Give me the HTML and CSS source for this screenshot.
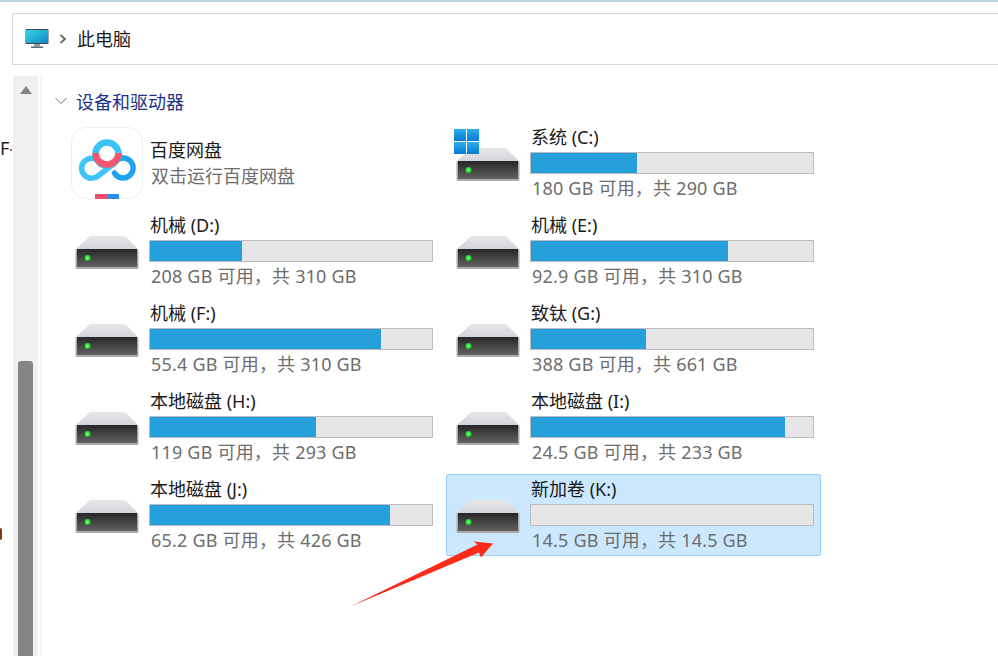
FILE: index.html
```html
<!DOCTYPE html>
<html lang="zh-CN">
  <head>
    <meta charset="UTF-8" />
    <title>此电脑</title>
    <link rel="stylesheet" href="styles.css">
  </head>
  <body>
    <svg class="defs" width="0" height="0">
      <defs>
        <linearGradient id="drive-front" x1="0" y1="0" x2="0" y2="1">
          <stop offset="0" stop-color="#262626" />
          <stop offset="1" stop-color="#626262" />
        </linearGradient>
        <linearGradient id="drive-top" x1="0" y1="0" x2="0" y2="1">
          <stop offset="0" stop-color="#e6e7e9" />
          <stop offset="1" stop-color="#d4d5d8" />
        </linearGradient>
        <linearGradient id="screen" x1="0" y1="0" x2="1" y2="1">
          <stop offset="0" stop-color="#35d3e0" />
          <stop offset="1" stop-color="#1287c9" />
        </linearGradient>
        <linearGradient id="win" x1="0" y1="0" x2="0" y2="1">
          <stop offset="0" stop-color="#2cb0ee" />
          <stop offset="1" stop-color="#0678d2" />
        </linearGradient>
        <symbol id="drive" viewBox="0 0 64 34">
          <path d="M15 0H50L63 13H1Z" fill="url(#drive-top)" />
          <rect x="0.5" y="13" width="63" height="20" rx="1.5" fill="#a9a9a9" />
          <rect x="2" y="13" width="60" height="18" fill="url(#drive-front)" />
          <circle cx="12.5" cy="22" r="3" fill="#2bd52b" />
          <circle cx="12.5" cy="22" r="1.4" fill="#7dff6e" />
        </symbol>
      </defs>
    </svg>

    <div class="topline"></div>

    <div class="address">
      <svg class="pc-icon" width="24" height="20" viewBox="0 0 24 20">
        <rect x="0.5" y="0" width="23" height="15" rx="1" fill="#3a4a55" />
        <rect x="1" y="1" width="22" height="13" fill="url(#screen)" />
        <rect x="9" y="15" width="6" height="2.5" fill="#8b9aa3" />
        <rect x="6" y="17.5" width="12" height="1.5" fill="#5b6870" />
      </svg>
      <svg class="crumb" width="8" height="10" viewBox="0 0 8 10">
        <path d="M1.5 1L6 5L1.5 9" fill="none" stroke="#666" stroke-width="1.8" />
      </svg>
      <span class="crumb-text">此电脑</span>
    </div>

    <div class="main">
      <div class="sliver">
        <div class="cut-line">
          <span>F</span>
          <span class="cut-colon"></span>
        </div>
        <span class="cut-dot"></span>
      </div>

      <div class="scrollbar">
        <span class="scroll-up"></span>
        <div class="thumb"></div>
      </div>
      <div class="divider"></div>

      <div class="content">
        <div class="group-head">
          <svg width="12" height="8" viewBox="0 0 12 8">
            <path d="M0.5 1L6 6.5L11.5 1" fill="none" stroke="#777" stroke-width="1" />
          </svg>
          <span>设备和驱动器</span>
        </div>

        <div class="tiles">
          <div class="tile app">
            <div class="app-icon">
              <svg width="72" height="72" viewBox="0 0 72 72">
                <rect x="0.5" y="0.5" width="71" height="71" rx="14" fill="#fff" stroke="#eeeeee" />
                <path d="M27 33.5A10 10 0 1 0 27 49L41 38" fill="none" stroke="#3cc4fb" stroke-width="5.5" stroke-linecap="round" />
                <path d="M44.5 34.5A10 10 0 1 1 43.5 46" fill="none" stroke="#1fa3f1" stroke-width="5.5" stroke-linecap="round" />
                <circle cx="36" cy="27" r="11.5" fill="none" stroke="#3bc3f7" stroke-width="6.5" />
                <path d="M24.5 26A11.5 11.5 0 1 0 47.5 26" fill="none" stroke="#f8566f" stroke-width="6.5" />
                <rect x="24" y="67" width="12" height="5" fill="#fb4a6e" />
                <rect x="36" y="67" width="12" height="5" fill="#2a8ff2" />
              </svg>
            </div>
            <div class="info">
              <div class="name">百度网盘</div>
              <div class="sub">双击运行百度网盘</div>
            </div>
          </div>

          <div class="tile">
            <div class="drive-icon">
              <svg class="win-logo" width="25" height="25" viewBox="0 0 25 25">
                <rect width="12" height="12" fill="url(#win)" />
                <rect x="13" width="12" height="12" fill="url(#win)" />
                <rect y="13" width="12" height="12" fill="url(#win)" />
                <rect x="13" y="13" width="12" height="12" fill="url(#win)" />
              </svg>
              <svg width="64" height="34"><use href="#drive" /></svg>
            </div>
            <div class="info">
              <div class="name">系统 (C:)</div>
              <div class="bar"><div class="fill" style="width: 37.6%"></div></div>
              <div class="sub">180 GB 可用，共 290 GB</div>
            </div>
          </div>

          <div class="tile">
            <div class="drive-icon"><svg width="64" height="34"><use href="#drive" /></svg></div>
            <div class="info">
              <div class="name">机械 (D:)</div>
              <div class="bar"><div class="fill" style="width: 32.6%"></div></div>
              <div class="sub">208 GB 可用，共 310 GB</div>
            </div>
          </div>

          <div class="tile">
            <div class="drive-icon"><svg width="64" height="34"><use href="#drive" /></svg></div>
            <div class="info">
              <div class="name">机械 (E:)</div>
              <div class="bar"><div class="fill" style="width: 69.9%"></div></div>
              <div class="sub">92.9 GB 可用，共 310 GB</div>
            </div>
          </div>

          <div class="tile">
            <div class="drive-icon"><svg width="64" height="34"><use href="#drive" /></svg></div>
            <div class="info">
              <div class="name">机械 (F:)</div>
              <div class="bar"><div class="fill" style="width: 81.9%"></div></div>
              <div class="sub">55.4 GB 可用，共 310 GB</div>
            </div>
          </div>

          <div class="tile">
            <div class="drive-icon"><svg width="64" height="34"><use href="#drive" /></svg></div>
            <div class="info">
              <div class="name">致钛 (G:)</div>
              <div class="bar"><div class="fill" style="width: 40.8%"></div></div>
              <div class="sub">388 GB 可用，共 661 GB</div>
            </div>
          </div>

          <div class="tile">
            <div class="drive-icon"><svg width="64" height="34"><use href="#drive" /></svg></div>
            <div class="info">
              <div class="name">本地磁盘 (H:)</div>
              <div class="bar"><div class="fill" style="width: 58.9%"></div></div>
              <div class="sub">119 GB 可用，共 293 GB</div>
            </div>
          </div>

          <div class="tile">
            <div class="drive-icon"><svg width="64" height="34"><use href="#drive" /></svg></div>
            <div class="info">
              <div class="name">本地磁盘 (I:)</div>
              <div class="bar"><div class="fill" style="width: 90.1%"></div></div>
              <div class="sub">24.5 GB 可用，共 233 GB</div>
            </div>
          </div>

          <div class="tile">
            <div class="drive-icon"><svg width="64" height="34"><use href="#drive" /></svg></div>
            <div class="info">
              <div class="name">本地磁盘 (J:)</div>
              <div class="bar"><div class="fill" style="width: 85.1%"></div></div>
              <div class="sub">65.2 GB 可用，共 426 GB</div>
            </div>
          </div>

          <div class="tile selected">
            <div class="drive-icon"><svg width="64" height="34"><use href="#drive" /></svg></div>
            <div class="info">
              <div class="name">新加卷 (K:)</div>
              <div class="bar"></div>
              <div class="sub">14.5 GB 可用，共 14.5 GB</div>
            </div>
          </div>
        </div>
      </div>
    </div>

    <!-- Red annotation arrow on top of the screenshot -->
    <svg class="arrow" width="998" height="656" viewBox="0 0 998 656">
      <path d="M350.5 606.5L477.5 544.5L473.5 541.5L493 543.5L481 557.5L479 552.5Z" fill="#fb2a1b" />
    </svg>
  </body>
</html>
```

FILE: styles.css
```css
* {
  box-sizing: border-box;
}

body {
  margin: 0;
  width: 998px;
  height: 656px;
  overflow: hidden;
  position: relative;
  background: #fff;
  color: #1a1a1a;
  font-family: "Noto Sans", "Noto Sans CJK SC", sans-serif;
  font-size: 18px;
}

.defs {
  position: absolute;
}

.topline {
  height: 2px;
  background: #c3d2e2;
}

.address {
  display: flex;
  align-items: center;
  height: 52px;
  margin: 11px 0 0 12px;
  padding-left: 12px;
  border: 1px solid #d9d9d9;
  border-right: none;
}

.crumb {
  margin-left: 10px;
  margin-right: 10px;
}

.crumb-text {
  margin-top: -2px;
}

.main {
  display: flex;
  height: 580px;
  margin-top: 11px;
}

.sliver {
  width: 13px;
  overflow: hidden;
}

.cut-line {
  display: flex;
  align-items: center;
  height: 24px;
  margin-top: 60px;
}

.cut-colon {
  width: 2px;
  height: 2px;
  margin: 3px 0 0 1px;
  background: #b5651d;
}

.cut-dot {
  display: block;
  width: 2px;
  height: 12px;
  margin-top: 368px;
  border-radius: 0 6px 6px 0;
  background: #7a3a1a;
}

.scrollbar {
  width: 25px;
  padding: 10px 5px 0;
  background: #f0f0f0;
}

.scroll-up {
  display: block;
  width: 0;
  margin: 0 auto 267px;
  border-left: 6px solid transparent;
  border-right: 6px solid transparent;
  border-bottom: 8px solid #858585;
}

.thumb {
  height: 300px;
  border-radius: 3px 3px 0 0;
  background: #858585;
}

.divider {
  width: 2px;
  margin-left: 2px;
  background: #f5f5f5;
}

.content {
  flex: 1;
  padding-left: 23px;
}

.group-head {
  display: flex;
  align-items: center;
  gap: 9px;
  height: 24px;
  margin: 13px 0 9px -10px;
  color: #1e3287;
}

.tiles {
  display: grid;
  grid-template-columns: 375px 375px;
  grid-auto-rows: 82px;
  gap: 6px;
}

.tile {
  display: flex;
  border: 1px solid transparent;
}

.tile.selected {
  background: #cce8ff;
  border-color: #99d1ff;
  border-radius: 2px;
}

.app-icon {
  width: 83px;
  padding: 4px 0 0 5px;
}

.drive-icon {
  position: relative;
  width: 83px;
  padding: 25px 0 0 9px;
}

.drive-icon svg {
  display: block;
}

.win-logo {
  position: absolute;
  top: 6px;
  left: 7px;
  z-index: 1;
}

.info {
  flex: 1;
  padding-top: 1px;
}

.name {
  height: 26px;
  padding-left: 1px;
  line-height: 26px;
}

.bar {
  width: 284px;
  height: 22px;
  margin-top: 2px;
  border: 1px solid #bcbcbc;
  background: #e6e6e6;
}

.fill {
  height: 100%;
  background: #26a0da;
}

.sub {
  height: 24px;
  margin-top: 2px;
  padding-left: 2px;
  line-height: 24px;
  color: #6d6d6d;
}

.bar + .sub {
  letter-spacing: 0.2px;
}

.app .info {
  padding-top: 14px;
}

.app .sub {
  margin-top: 1px;
}

.arrow {
  position: absolute;
  top: 0;
  left: 0;
}
```
